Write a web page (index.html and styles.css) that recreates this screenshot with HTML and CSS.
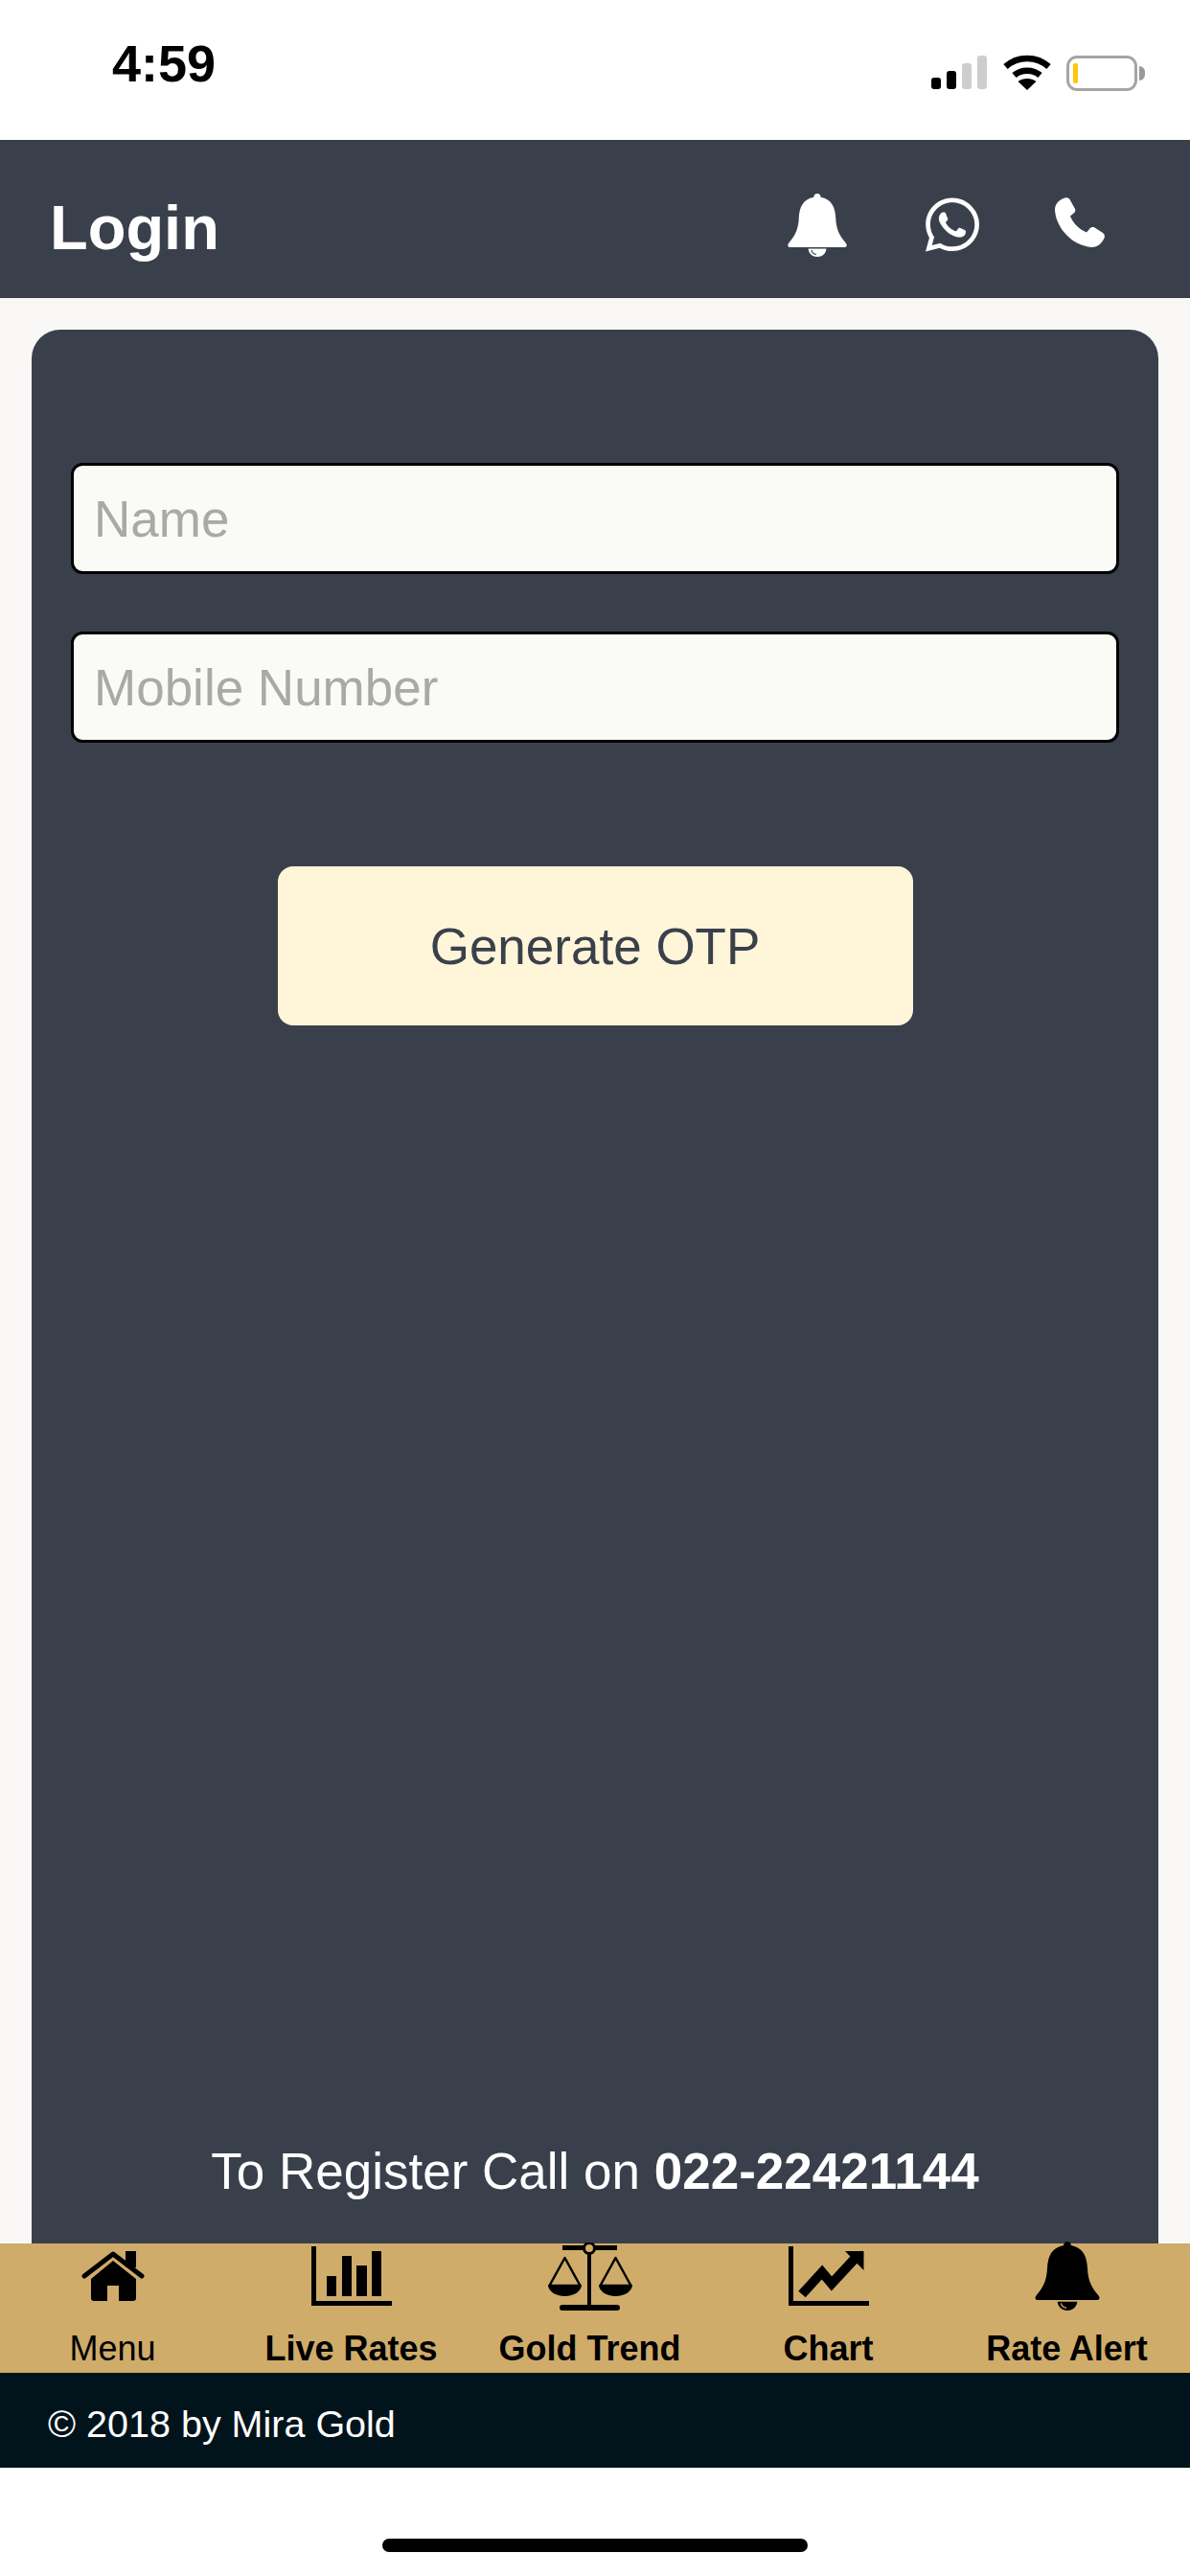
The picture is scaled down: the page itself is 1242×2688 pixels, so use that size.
FILE: index.html
```html
<!DOCTYPE html>
<html lang="en">
<head>
  <meta charset="UTF-8">
  <meta name="viewport" content="width=device-width, initial-scale=1.0">
  <title>Login</title>
  <link rel="stylesheet" href="styles.css">
</head>
<body>
  <div class="status-bar">
    <span class="time">4:59</span>
    <div class="status-icons">
      <div class="signal">
        <span class="bar bar1"></span>
        <span class="bar bar2"></span>
        <span class="bar bar3 off"></span>
        <span class="bar bar4 off"></span>
      </div>
      <svg class="wifi" viewBox="0 0 50 37">
        <path d="M2.5 12.5C15 1 35 1 47.5 12.5" fill="none" stroke="#000" stroke-width="6.5"/>
        <path d="M11.5 21.5C19 15 31 15 38.5 21.5" fill="none" stroke="#000" stroke-width="6.5"/>
        <path d="M25 37L15.5 28C20.5 24 29.5 24 34.5 28Z" fill="#000"/>
      </svg>
      <div class="battery">
        <span class="battery-level"></span>
        <span class="battery-nub"></span>
      </div>
    </div>
  </div>

  <header class="top-bar">
    <h1>Login</h1>
    <div class="top-icons">
      <svg class="icon-bell" viewBox="0 0 62 66">
        <path fill="#fff" d="M31 0c2.200 0 3.600 1.600 3.600 3.700C46 6 49.600 14 50.200 25c.5 11 3 18 10.500 26.500 1.800 2.200 1.200 4.500-1.800 4.500H3.100c-3 0-3.600-2.300-1.800-4.500C8.800 43 11.300 36 11.800 25 12.400 14 16 6 27.400 3.700 27.400 1.600 28.800 0 31 0z"/>
        <path fill="#fff" d="M21.500 57.500h19C40 62.500 36 66 31 66s-9-3.500-9.500-8.500z"/>
        <path fill="none" stroke="#3a404b" stroke-width="1.200" d="M25 59c.5 2.500 2.500 4.200 5 4.500"/>
      </svg>
      <svg class="icon-whatsapp" viewBox="0 32 448 448">
        <path fill="#fff" d="M380.900 97.100C339 55.100 283.200 32 223.900 32c-122.400 0-222 99.600-222 222 0 39.100 10.200 77.300 29.600 111L0 480l117.700-30.900c32.400 17.700 68.900 27 106.100 27h.1c122.300 0 224.100-99.600 224.100-222 0-59.300-25.200-115-67.100-157zm-157 341.600c-33.200 0-65.700-8.900-94-25.700l-6.700-4-69.800 18.300L72 359.200l-4.400-7c-18.500-29.400-28.200-63.300-28.200-98.200 0-101.700 82.800-184.500 184.600-184.500 49.300 0 95.600 19.200 130.400 54.100 34.800 34.900 56.200 81.200 56.100 130.500 0 101.800-84.900 184.600-186.600 184.600zm101.200-138.200c-5.500-2.800-32.800-16.200-37.900-18-5.100-1.900-8.800-2.800-12.500 2.800-3.700 5.600-14.300 18-17.600 21.800-3.200 3.700-6.500 4.200-12 1.400-32.600-16.300-54-29.100-75.500-66-5.700-9.800 5.700-9.100 16.300-30.300 1.800-3.700.9-6.900-.5-9.700-1.400-2.800-12.500-30.100-17.100-41.200-4.500-10.800-9.100-9.300-12.500-9.500-3.200-.2-6.900-.2-10.600-.2-3.700 0-9.700 1.400-14.800 6.900-5.100 5.600-19.400 19-19.400 46.300 0 27.300 19.900 53.700 22.600 57.400 2.800 3.700 39.100 59.700 94.800 83.800 35.200 15.200 49 16.500 66.600 13.900 10.700-1.600 32.800-13.400 37.400-26.400 4.600-13 4.600-24.100 3.200-26.400-1.300-2.500-5-3.900-10.500-6.600z"/>
      </svg>
      <svg class="icon-phone" viewBox="0 0 52 52">
        <path fill="#fff" d="M9 1C12-.5 15 .5 16 3l5 9c.8 2 0 3.500-2 5l-3 2.500C19 27 25 33 33 36.500l3-3.500c1.500-2 3.500-2.500 5.500-1.500l8.500 5.500c2 1.500 2.500 4 1 6.500-3 5.500-7 8.500-13 8.500C18 50 1 32 0 13 0 7 4 3 9 1z"/>
      </svg>
    </div>
  </header>

  <main class="content">
    <div class="card">
      <input class="field" type="text" placeholder="Name">
      <input class="field" type="text" placeholder="Mobile Number">
      <button class="otp-btn">Generate OTP</button>
      <p class="register">To Register Call on <b>022-22421144</b></p>
    </div>
  </main>

  <nav class="tabs">
    <div class="tab">
      <div class="tab-icon">
        <svg class="i-home" viewBox="0 0 66 52">
          <path fill="#000" d="M46 0h11v17H46z"/>
          <path fill="none" stroke="#000" stroke-width="5" stroke-linecap="round" stroke-linejoin="round" d="M3 26L33 3l30 23"/>
          <path fill="#000" d="M33 10l24 19v20a3 3 0 0 1-3 3H39V36H27v16H13a3 3 0 0 1-3-3V29z"/>
        </svg>
      </div>
      <span class="tab-label normal">Menu</span>
    </div>
    <div class="tab">
      <div class="tab-icon">
        <svg class="i-chart" viewBox="0 0 84 62">
          <path fill="#000" d="M0 0h5v57h79v5H0z"/>
          <path fill="#000" d="M16 31h10v21H16zM32 10h10v42H32zM47 20h11v32H47zM63 5h10v47H63z"/>
        </svg>
      </div>
      <span class="tab-label">Live Rates</span>
    </div>
    <div class="tab">
      <div class="tab-icon">
        <svg class="i-scale" viewBox="0 0 88 71">
          <path fill="#000" d="M15 3h57v5H15zM41 8h4v58h-4zM15 65h57a3 3 0 0 1 0 6H15a3 3 0 0 1 0-6z"/>
          <circle cx="43" cy="6" r="5.500" fill="#cfac6a" stroke="#000" stroke-width="3"/>
          <path fill="none" stroke="#000" stroke-width="2.500" stroke-linejoin="round" d="M17.500 16L1.500 45h32zM70.500 16L54.500 45h32z"/>
          <path fill="#000" d="M0 44h35c0 7-8 12-17.500 12S0 51 0 44zM53 44h35c0 7-8 12-17.500 12S53 51 53 44z"/>
        </svg>
      </div>
      <span class="tab-label">Gold Trend</span>
    </div>
    <div class="tab">
      <div class="tab-icon">
        <svg class="i-chart" viewBox="0 0 84 62">
          <path fill="#000" d="M0 0h5v57h79v5H0z"/>
          <path fill="none" stroke="#000" stroke-width="10" d="M14 50l21-23 10 12 24-26"/>
          <path fill="#000" d="M59 5h19.500v20z"/>
        </svg>
      </div>
      <span class="tab-label">Chart</span>
    </div>
    <div class="tab">
      <div class="tab-icon">
        <svg class="i-bell" viewBox="0 0 62 66">
          <path fill="#000" d="M31 0c2.200 0 3.600 1.600 3.600 3.700C46 6 49.600 14 50.200 25c.5 11 3 18 10.500 26.500 1.800 2.200 1.200 4.500-1.800 4.500H3.100c-3 0-3.600-2.300-1.800-4.500C8.800 43 11.300 36 11.800 25 12.400 14 16 6 27.400 3.700 27.400 1.600 28.800 0 31 0z"/>
          <path fill="#000" d="M21.500 57.500h19C40 62.500 36 66 31 66s-9-3.500-9.500-8.500z"/>
          <path fill="none" stroke="#cfac6a" stroke-width="1.200" d="M25 59c.5 2.500 2.500 4.200 5 4.500"/>
        </svg>
      </div>
      <span class="tab-label">Rate Alert</span>
    </div>
  </nav>

  <footer class="copy">© 2018 by Mira Gold</footer>

  <div class="home-area">
    <span class="home-bar"></span>
  </div>
</body>
</html>
```

FILE: styles.css
```css
* {
  box-sizing: border-box;
}
html, body {
  margin: 0;
  height: 2688px;
  overflow: hidden;
}
body {
  width: 1242px;
  display: flex;
  flex-direction: column;
  font-family: "Liberation Sans", Arial, sans-serif;
  background-color: #fff;
}

/* status bar */
.status-bar {
  height: 146px;
  flex: none;
  display: flex;
  justify-content: space-between;
  padding: 36px 55px 0 117px;
  background-color: #fff;
}
.time {
  font-size: 54px;
  line-height: 60px;
  font-weight: bold;
  color: #000;
}
.status-icons {
  display: flex;
  align-items: flex-start;
  padding-top: 22px;
}
.signal {
  display: flex;
  align-items: flex-end;
  gap: 6px;
  height: 35px;
}
.bar {
  width: 10px;
  border-radius: 3px;
  background-color: #000;
}
.bar.off {
  background-color: #cdcdcd;
}
.bar1 { height: 12px; }
.bar2 { height: 19px; }
.bar3 { height: 27px; }
.bar4 { height: 35px; }
.wifi {
  width: 50px;
  height: 37px;
  margin: -1px 16px 0 17px;
}
.battery {
  position: relative;
  width: 74px;
  height: 37px;
  border: 3px solid #a5a5a5;
  border-radius: 11px;
  padding: 5px 4px;
}
.battery-level {
  display: block;
  width: 5px;
  height: 21px;
  border-radius: 2px;
  background-color: #ffc60a;
}
.battery-nub {
  position: absolute;
  right: -11px;
  top: 8px;
  width: 6px;
  height: 15px;
  border-radius: 0 8px 8px 0;
  background-color: #9a9a9a;
}

/* top bar */
.top-bar {
  height: 165px;
  flex: none;
  display: flex;
  justify-content: space-between;
  align-items: center;
  padding: 12px 89px 0 52px;
  background-color: #3a404b;
}
.top-bar h1 {
  margin: 6px 0 0;
  font-size: 65px;
  color: #fff;
}
.top-icons {
  display: flex;
  align-items: center;
}
.icon-bell {
  width: 62px;
  height: 66px;
}
.icon-whatsapp {
  width: 56px;
  height: 57px;
  margin-left: 82px;
}
.icon-phone {
  width: 52px;
  height: 52px;
  margin: 0 0 5px 79px;
}

/* main card */
.content {
  flex: 1;
  min-height: 0;
  display: flex;
  padding: 33px 33px 0;
  background-color: #f9f8f6;
}
.card {
  flex: 1;
  display: flex;
  flex-direction: column;
  align-items: center;
  padding: 139px 41px 0;
  border-radius: 30px 30px 0 0;
  background-color: #3a404b;
}
.field {
  width: 100%;
  height: 116px;
  flex: none;
  margin-bottom: 60px;
  padding: 0 21px;
  border: 3px solid #000;
  border-radius: 12px;
  font-family: inherit;
  font-size: 53px;
  color: #333;
  background-color: #fafaf7;
}
.field::placeholder {
  color: #a9a9a9;
  opacity: 1;
}
.otp-btn {
  width: 663px;
  height: 166px;
  flex: none;
  margin-top: 69px;
  border: none;
  border-radius: 16px;
  font-family: inherit;
  font-size: 53px;
  color: #3a404b;
  background-color: #fff5d8;
}
.register {
  margin: auto 0 45px;
  font-size: 53px;
  line-height: 60px;
  color: #fff;
}

/* bottom tabs */
.tabs {
  width: 1249px;
  height: 135px;
  flex: none;
  margin-left: -7px;
  display: grid;
  grid-template-columns: repeat(5, 249px);
  background-color: #cfac6a;
}
.tab {
  display: flex;
  flex-direction: column;
  align-items: center;
}
.tab-icon {
  height: 68px;
  display: flex;
  align-items: center;
  justify-content: center;
}
.tab-icon svg {
  flex: none;
}
.i-home {
  width: 66px;
  height: 52px;
}
.i-chart {
  width: 84px;
  height: 62px;
}
.i-scale {
  width: 88px;
  height: 71px;
}
.i-bell {
  width: 68px;
  height: 72px;
}
.tab-label {
  margin-top: 20px;
  font-size: 36px;
  line-height: 44px;
  font-weight: bold;
  color: #000;
  white-space: nowrap;
}
.tab-label.normal {
  font-weight: normal;
}

.copy {
  height: 99px;
  flex: none;
  display: flex;
  align-items: center;
  padding: 7px 0 0 50px;
  font-size: 39.500px;
  color: #fff;
  background-color: #01141b;
}
.home-area {
  height: 113px;
  flex: none;
  padding: 74px 0 0 399px;
  background-color: #fff;
}
.home-bar {
  display: block;
  width: 444px;
  height: 14px;
  border-radius: 7px;
  background-color: #000;
}
```
